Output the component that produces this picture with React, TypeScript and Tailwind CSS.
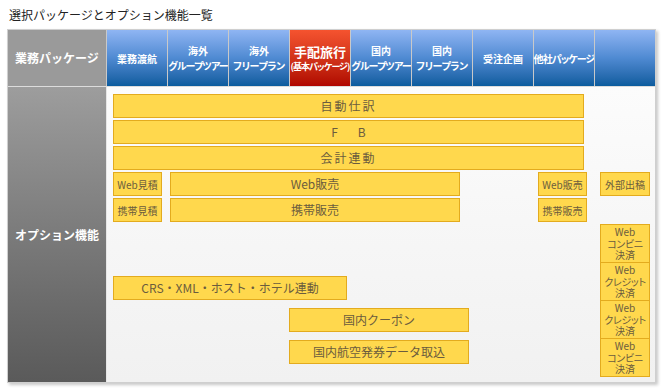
import React from "react";

const FONT = "font-['Noto_Sans_CJK_JP','Noto_Sans',sans-serif]";

function Box({
  w,
  h = 24,
  className = "",
  children,
}: {
  w: number;
  h?: number;
  className?: string;
  children: React.ReactNode;
}) {
  return (
    <div
      className={`shrink-0 border border-[#e3ab1e] bg-[#ffd84d] text-[#6b5c3e] flex items-center justify-center text-center whitespace-nowrap ${className}`}
      style={{ width: w, height: h }}
    >
      {children}
    </div>
  );
}

function BlueHead({ children }: { children: React.ReactNode }) {
  return (
    <div className="w-[61px] shrink-0 border-l border-[#c9c9c9] bg-linear-to-b from-[#8fb5f3] via-[#4f8ad2] to-[#0a5c9e] flex flex-col items-center justify-center text-white font-bold text-[10px] leading-[15px] [font-feature-settings:'palt'] whitespace-nowrap">
      {children}
    </div>
  );
}

function WebCol({ second, first }: { second: string; first?: boolean }) {
  return (
    <div
      className={`w-[50px] border border-[#e3ab1e] bg-[#ffd84d] text-[#6b5c3e] flex flex-col items-center justify-center text-[10px] leading-[11.5px] [font-feature-settings:'palt'] whitespace-nowrap ${
        first ? "h-[39px]" : "h-[38px] border-t-0"
      }`}
    >
      <span>Web</span>
      <span className="tracking-[-0.3px]">{second}</span>
      <span>決済</span>
    </div>
  );
}

export default function App() {
  return (
    <div className={`${FONT} bg-white w-[667px] h-[389px] overflow-hidden`}>
      <div className="pl-[9px] pt-[7px] leading-[16px] text-[12px] text-[#222] h-[29px]">
        選択パッケージとオプション機能一覧
      </div>
      <div className="ml-[7px] w-[649px] border border-[#cfcfcf] shadow-[2px_2px_3px_rgba(0,0,0,0.22)]">
        {/* header */}
        <div className="flex h-[57px] border-b border-[#dcdcdc]">
          <div className="w-[98px] shrink-0 bg-[#9a9a9a] flex items-center justify-center text-white font-bold text-[12px]">
            業務パッケージ
          </div>
          <BlueHead>業務渡航</BlueHead>
          <BlueHead>
            <span>海外</span>
            <span className="tracking-[-0.9px]">グループツアー</span>
          </BlueHead>
          <BlueHead>
            <span>海外</span>
            <span className="tracking-[-0.4px]">フリープラン</span>
          </BlueHead>
          <div className="w-[61px] shrink-0 border-l border-[#c9c9c9] bg-linear-to-b from-[#f5532f] to-[#b00500] flex flex-col items-center justify-center text-white font-bold whitespace-nowrap [font-feature-settings:'palt']">
            <span className="text-[13px] leading-[17px]">手配旅行</span>
            <span className="text-[9px] leading-[14px] tracking-[-0.9px]">(基本パッケージ)</span>
          </div>
          <BlueHead>
            <span>国内</span>
            <span className="tracking-[-0.9px]">グループツアー</span>
          </BlueHead>
          <BlueHead>
            <span>国内</span>
            <span className="tracking-[-0.4px]">フリープラン</span>
          </BlueHead>
          <BlueHead>受注企画</BlueHead>
          <BlueHead>
            <span className="tracking-[-0.9px]">他社パッケージ</span>
          </BlueHead>
          <BlueHead>{""}</BlueHead>
        </div>
        {/* body */}
        <div className="flex h-[295px]">
          <div className="w-[98px] shrink-0 bg-linear-to-b from-[#9d9d9d] to-[#5a5a5a] flex items-center justify-center text-white font-bold text-[12px]">
            オプション機能
          </div>
          <div className="w-[549px] border-l border-[#e6e6e6] bg-linear-to-b from-[#fcfcfc] to-[#f1f1f1] pt-[7px] pl-[6px] flex flex-col gap-[2px]">
            <Box w={471} className="text-[12px] tracking-[2px]">
              自動仕訳
            </Box>
            <Box w={471} className="text-[12px] gap-[20px]">
              <span>F</span>
              <span>B</span>
            </Box>
            <Box w={471} className="text-[12px] tracking-[2px]">
              会計連動
            </Box>
            <div className="flex">
              <Box w={49} className="text-[10px]">
                Web見積
              </Box>
              <Box w={290} className="ml-[8px] text-[12px]">
                Web販売
              </Box>
              <Box w={49} className="ml-[78px] text-[10px]">
                Web販売
              </Box>
              <Box w={50} className="ml-[13px] text-[10px]">
                外部出稿
              </Box>
            </div>
            <div className="flex">
              <Box w={49} className="text-[10px]">
                携帯見積
              </Box>
              <Box w={290} className="ml-[8px] text-[12px]">
                携帯販売
              </Box>
              <Box w={49} className="ml-[78px] text-[10px]">
                携帯販売
              </Box>
            </div>
            <div className="flex">
              <div className="w-[487px] pt-[52px] flex flex-col gap-[8px]">
                <Box w={234} className="text-[12px]">
                  CRS・XML・ホスト・ホテル連動
                </Box>
                <Box w={180} className="ml-[176px] text-[12px]">
                  国内クーポン
                </Box>
                <Box w={180} className="ml-[176px] text-[12px]">
                  国内航空発券データ取込
                </Box>
              </div>
              <div className="flex flex-col">
                <WebCol first second="コンビニ" />
                <WebCol second="クレジット" />
                <WebCol second="クレジット" />
                <WebCol second="コンビニ" />
              </div>
            </div>
          </div>
        </div>
      </div>
    </div>
  );
}
